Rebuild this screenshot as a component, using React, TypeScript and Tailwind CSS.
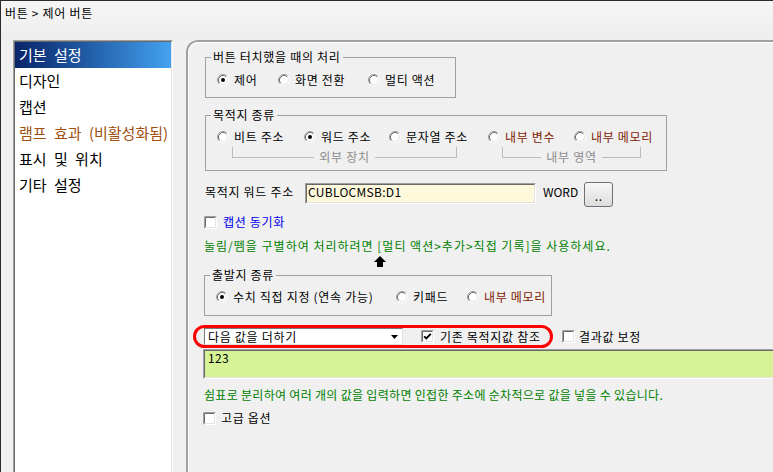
import React from "react";

const Radio = ({ label, checked, color, w }: { label: string; checked?: boolean; color?: string; w?: string }) => (
  <div className={`flex items-center h-[14px] shrink-0 ${w ?? ""}`}>
    <svg width="12" height="12" viewBox="0 0 12 12" className="shrink-0">
      <circle cx="6" cy="6" r="5" fill="#fff" />
      <path d="M2.11 9.89A5.5 5.5 0 0 1 9.89 2.11" stroke="#a0a0a0" fill="none" />
      <path d="M9.89 2.11A5.5 5.5 0 0 1 2.11 9.89" stroke="#ffffff" fill="none" />
      <path d="M2.82 9.18A4.5 4.5 0 0 1 9.18 2.82" stroke="#696969" fill="none" />
      <path d="M9.18 2.82A4.5 4.5 0 0 1 2.82 9.18" stroke="#e3e3e3" fill="none" />
      {checked && <circle cx="6" cy="6" r="2" fill="#000" />}
    </svg>
    <span className={`ml-[5px] whitespace-nowrap ${color ?? ""}`}>{label}</span>
  </div>
);

const Check = ({ checked }: { checked?: boolean }) => (
  <svg width="13" height="13" viewBox="0 0 13 13" className="shrink-0">
    <rect x="0" y="0" width="13" height="13" fill="#fff" />
    <path d="M0.5 12.5V0.5H12.5" stroke="#a0a0a0" fill="none" />
    <path d="M1.5 11.5V1.5H11.5" stroke="#696969" fill="none" />
    <path d="M1.5 11.5H11.5V1.5" stroke="#e3e3e3" fill="none" />
    {checked && <path d="M3.2 6.3L5.3 8.5L9.8 3.9" stroke="#000" strokeWidth="1.9" fill="none" />}
  </svg>
);

const Bracket = ({ label, w }: { label: string; w: string }) => (
  <div className={`flex items-start h-[20px] shrink-0 ${w}`}>
    <div className="flex-1 h-[11px] border-l border-b border-[#bcbcbc]" />
    <span className="px-[5px] mt-[3px] leading-[14px] text-[#8c8c8c] whitespace-nowrap">{label}</span>
    <div className="flex-1 h-[11px] border-r border-b border-[#bcbcbc]" />
  </div>
);

const menu = ["기본 설정", "디자인", "캡션", "램프 효과 (비활성화됨)", "표시 및 위치", "기타 설정"];

export default function App() {
  return (
    <div className="w-[773px] h-[472px] overflow-hidden flex flex-col bg-[#f0f0f0] border-t border-l border-[#2b2b2b] text-[12px] leading-[14px] tracking-[0.7px] text-black font-['Noto_Sans_CJK_KR','Noto_Sans',sans-serif]">
      <div className="h-[39px] shrink-0 pl-[4px] pt-[5px] bg-linear-to-b from-[#f5f5f5] to-[#eeeeee]">버튼 &gt; 제어 버튼</div>

      <div className="flex flex-1 min-h-0 pl-[12px]">
        {/* left menu */}
        <div className="w-[160px] h-[460px] shrink-0 border border-t-[#a0a0a0] border-l-[#a0a0a0] border-r-white border-b-white">
          <div className="h-full bg-white border border-t-[#696969] border-l-[#696969] border-r-[#e3e3e3] border-b-[#e3e3e3]">
            {menu.map((m, i) => (
              <div
                key={m}
                className={`h-[26px] pl-[4px] text-[15px] leading-[26px] tracking-normal [word-spacing:4px] whitespace-nowrap ${
                  i === 0
                    ? "bg-linear-to-r from-[#0a246a] to-[#45a2f0] text-white"
                    : i === 3
                    ? "text-[#a0500f]"
                    : "text-black"
                }`}
              >
                {m}
              </div>
            ))}
          </div>
        </div>

        {/* right panel */}
        <div className="ml-[13px] w-[600px] h-[460px] shrink-0 border-t-2 border-l-2 border-[#a0a0a0] rounded-tl-[12px]">
          <div className="h-full border-t border-l border-white rounded-tl-[10px] pl-[15px] pt-[7px] flex flex-col items-start">
            <fieldset className="ml-[1px] w-[251px] border border-[#a0a0a0]">
              <legend className="ml-[5px] px-[2px] leading-[14px]">버튼 터치했을 때의 처리</legend>
              <div className="flex pl-[11px] pt-[9px] pb-[10px]">
                <Radio label="제어" checked w="w-[61px]" />
                <Radio label="화면 전환" w="w-[90px]" />
                <Radio label="멀티 액션" />
              </div>
            </fieldset>

            <fieldset className="mt-[10px] ml-[1px] w-[462px] border border-[#a0a0a0]">
              <legend className="ml-[5px] px-[2px] leading-[14px]">목적지 종류</legend>
              <div className="flex pl-[11px] pt-[8px]">
                <Radio label="비트 주소" w="w-[87px]" />
                <Radio label="워드 주소" checked w="w-[85px]" />
                <Radio label="문자열 주소" w="w-[99px]" />
                <Radio label="내부 변수" color="text-[#802000]" w="w-[86px]" />
                <Radio label="내부 메모리" color="text-[#802000]" />
              </div>
              <div className="flex mt-[3px] pb-[3px] pl-[26px]">
                <Bracket label="외부 장치" w="w-[225px]" />
                <div className="w-[45px] shrink-0" />
                <Bracket label="내부 영역" w="w-[139px]" />
              </div>
            </fieldset>

            <div className="mt-[11px] flex items-start h-[25px]">
              <span className="ml-[1px] w-[100px] mt-[3px] whitespace-nowrap">목적지 워드 주소</span>
              <div className="mt-[1px] w-[231px] h-[21px] border border-t-[#a0a0a0] border-l-[#a0a0a0] border-r-white border-b-white">
                <div className="h-full bg-[#fff9dc] border border-t-[#696969] border-l-[#696969] border-r-[#e3e3e3] border-b-[#e3e3e3] pl-[1px] leading-[13px] tracking-[0.3px]">
                  CUBLOCMSB:D1
                </div>
              </div>
              <span className="ml-[7px] mt-[3px] tracking-normal">WORD</span>
              <button className="ml-[6px] w-[29px] h-[25px] rounded-[3px] border border-[#707070] bg-linear-to-b from-[#f7f7f7] to-[#dcdcdc] text-[12px] leading-[14px] pt-[3px]">
                ..
              </button>
            </div>

            <div className="mt-[8px] flex items-center h-[14px]">
              <Check />
              <span className="ml-[6px] text-[#0000ee]">캡션 동기화</span>
            </div>

            <div className="mt-[10px] text-[#008000] tracking-[1px] whitespace-nowrap">
              눌림/뗌을 구별하여 처리하려면 [멀티 액션&gt;추가&gt;직접 기록]을 사용하세요.
            </div>

            <svg width="12" height="11" viewBox="0 0 12 11" className="mt-[3px] ml-[170px]">
              <path d="M6 0L12 6H0Z" fill="#000" />
              <rect x="3" y="6" width="6" height="5" fill="#000" />
            </svg>

            <fieldset className="mt-[1px] w-[348px] border border-[#a0a0a0]">
              <legend className="ml-[5px] px-[2px] leading-[14px]">출발지 종류</legend>
              <div className="flex pl-[11px] pt-[8px] pb-[11px]">
                <Radio label="수치 직접 지정 (연속 가능)" checked w="w-[180px]" />
                <Radio label="키패드" w="w-[71px]" />
                <Radio label="내부 메모리" color="text-[#802000]" />
              </div>
            </fieldset>

            <div className="relative mt-[12px] flex items-center h-[17px]">
              <div className="w-[199px] h-[17px] flex border border-t-[#7a7a7a] border-l-[#7a7a7a] border-r-[#e3e3e3] border-b-[#e3e3e3] bg-white">
                <span className="flex-1 pl-[3px] leading-[15px] whitespace-nowrap">다음 값을 더하기</span>
                <div className="w-[15px] h-full flex items-center justify-center">
                  <svg width="7" height="4" viewBox="0 0 7 4">
                    <path d="M0 0H7L3.5 4Z" fill="#000" />
                  </svg>
                </div>
              </div>
              <div className="ml-[18px] w-[141px] flex items-center">
                <Check checked />
                <span className="ml-[6px] whitespace-nowrap">기존 목적지값 참조</span>
              </div>
              <div className="flex items-center">
                <Check />
                <span className="ml-[4px] whitespace-nowrap">결과값 보정</span>
              </div>
              <div className="absolute left-[-11px] top-[-3px] w-[360px] h-[23px] border-[3px] border-[#ff0000] rounded-full pointer-events-none" />
            </div>

            <div className="mt-[4px] -ml-[1px] self-stretch h-[30px] border border-t-[#a0a0a0] border-l-[#a0a0a0] border-r-white border-b-white">
              <div className="h-full bg-[#d6f495] border border-t-[#696969] border-l-[#696969] border-r-[#e3e3e3] border-b-[#e3e3e3] pl-[3px] leading-[14px] tracking-[0.3px]">
                123
              </div>
            </div>

            <div className="mt-[9px] text-[#008000] tracking-[0.3px] whitespace-nowrap">
              쉼표로 분리하여 여러 개의 값을 입력하면 인접한 주소에 순차적으로 값을 넣을 수 있습니다.
            </div>

            <div className="mt-[9px] -ml-[1px] flex items-center h-[14px]">
              <Check />
              <span className="ml-[5px]">고급 옵션</span>
            </div>
          </div>
        </div>
      </div>
    </div>
  );
}
